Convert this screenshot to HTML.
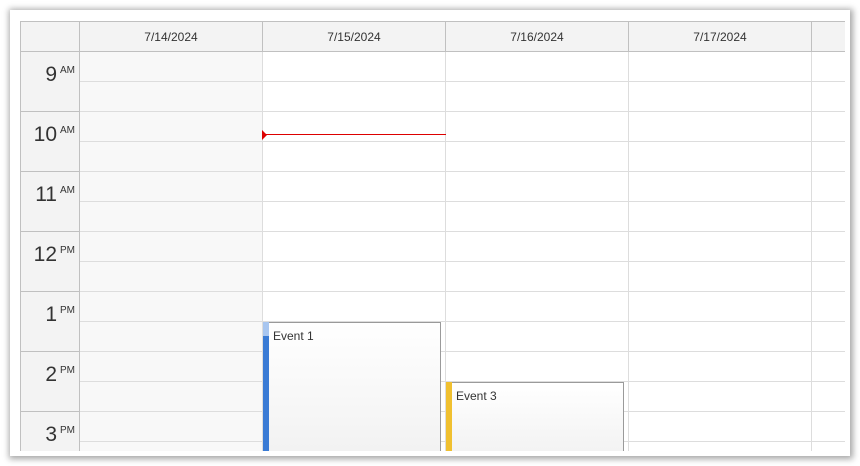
<!DOCTYPE html>
<html><head><style>
*{margin:0;padding:0;box-sizing:border-box}
body{width:860px;height:466px;background:#fff;position:relative;overflow:hidden;font-family:"Segoe UI","Liberation Sans",sans-serif;}
.card{position:absolute;left:10px;top:10px;width:840px;height:446px;background:#fff;box-shadow:1px 1px 6px 2px rgba(0,0,0,0.35);}
.grid{position:absolute;left:20px;top:21px;width:825px;height:430px;overflow:hidden;}
.a{position:absolute}
.hdr{position:absolute;top:0;height:31px;background:#f3f3f3;border-right:1px solid #c0c0c0;border-bottom:1px solid #c0c0c0;border-top:1px solid #c0c0c0;font-size:12px;color:#333;text-align:center;line-height:31px}
.rh{position:absolute;left:0;width:60px;height:60px;background:#f3f3f3;border-right:1px solid #c0c0c0;border-bottom:1px solid #c0c0c0;border-left:1px solid #c0c0c0}
.rh .n{position:absolute;right:22px;top:11px;font-size:21px;color:#333;line-height:24px}
.rh .s{position:absolute;left:39px;top:13px;font-size:10px;color:#333}
.hl{position:absolute;height:1px;background:#ddd}
.vl{position:absolute;width:1px;background:#ddd}
.ev{position:absolute;border:1px solid #9a9a9a;background:linear-gradient(#fff,#f1f1f1);font-size:12px;color:#333}
</style></head><body>
<div class="card"></div>
<div class="grid">
<div class="hdr" style="left:0;width:60px;border-left:1px solid #c0c0c0"></div>
<div class="hdr" style="left:60px;width:183px">7/14/2024</div>
<div class="hdr" style="left:243px;width:183px">7/15/2024</div>
<div class="hdr" style="left:426px;width:183px">7/16/2024</div>
<div class="hdr" style="left:609px;width:183px">7/17/2024</div>
<div class="hdr" style="left:792px;width:40px"></div>
<div class="a" style="left:60px;top:31px;width:182px;height:400px;background:#f8f8f8"></div>
<div class="rh" style="top:31px"><span class="n">9</span><span class="s">AM</span></div>
<div class="rh" style="top:91px"><span class="n">10</span><span class="s">AM</span></div>
<div class="rh" style="top:151px"><span class="n">11</span><span class="s">AM</span></div>
<div class="rh" style="top:211px"><span class="n">12</span><span class="s">PM</span></div>
<div class="rh" style="top:271px"><span class="n">1</span><span class="s">PM</span></div>
<div class="rh" style="top:331px"><span class="n">2</span><span class="s">PM</span></div>
<div class="rh" style="top:391px"><span class="n">3</span><span class="s">PM</span></div>
<div class="hl" style="left:60px;width:770px;top:60px"></div>
<div class="hl" style="left:60px;width:770px;top:90px"></div>
<div class="hl" style="left:60px;width:770px;top:120px"></div>
<div class="hl" style="left:60px;width:770px;top:150px"></div>
<div class="hl" style="left:60px;width:770px;top:180px"></div>
<div class="hl" style="left:60px;width:770px;top:210px"></div>
<div class="hl" style="left:60px;width:770px;top:240px"></div>
<div class="hl" style="left:60px;width:770px;top:270px"></div>
<div class="hl" style="left:60px;width:770px;top:300px"></div>
<div class="hl" style="left:60px;width:770px;top:330px"></div>
<div class="hl" style="left:60px;width:770px;top:360px"></div>
<div class="hl" style="left:60px;width:770px;top:390px"></div>
<div class="hl" style="left:60px;width:770px;top:420px"></div>
<div class="vl" style="left:242px;top:31px;height:400px"></div>
<div class="vl" style="left:425px;top:31px;height:400px"></div>
<div class="vl" style="left:608px;top:31px;height:400px"></div>
<div class="vl" style="left:791px;top:31px;height:400px"></div>
<div class="a" style="left:243px;top:113px;width:183px;height:1px;background:#d00"></div>
<div class="a" style="left:242px;top:109px;width:0;height:0;border-top:5px solid transparent;border-bottom:5px solid transparent;border-left:5px solid #d00"></div>
<div class="ev" style="left:243px;top:301px;width:178px;height:140px"><div class="a" style="left:-1px;top:-1px;width:6px;height:141px;background:#3a7bd5"></div><div class="a" style="left:-1px;top:-1px;width:6px;height:14px;background:#a8c6f0"></div><div class="a" style="left:9px;top:6px">Event 1</div></div>
<div class="ev" style="left:426px;top:361px;width:178px;height:80px"><div class="a" style="left:-1px;top:-1px;width:6px;height:81px;background:#f0c030"></div><div class="a" style="left:9px;top:6px">Event 3</div></div>
</div>
</body></html>
